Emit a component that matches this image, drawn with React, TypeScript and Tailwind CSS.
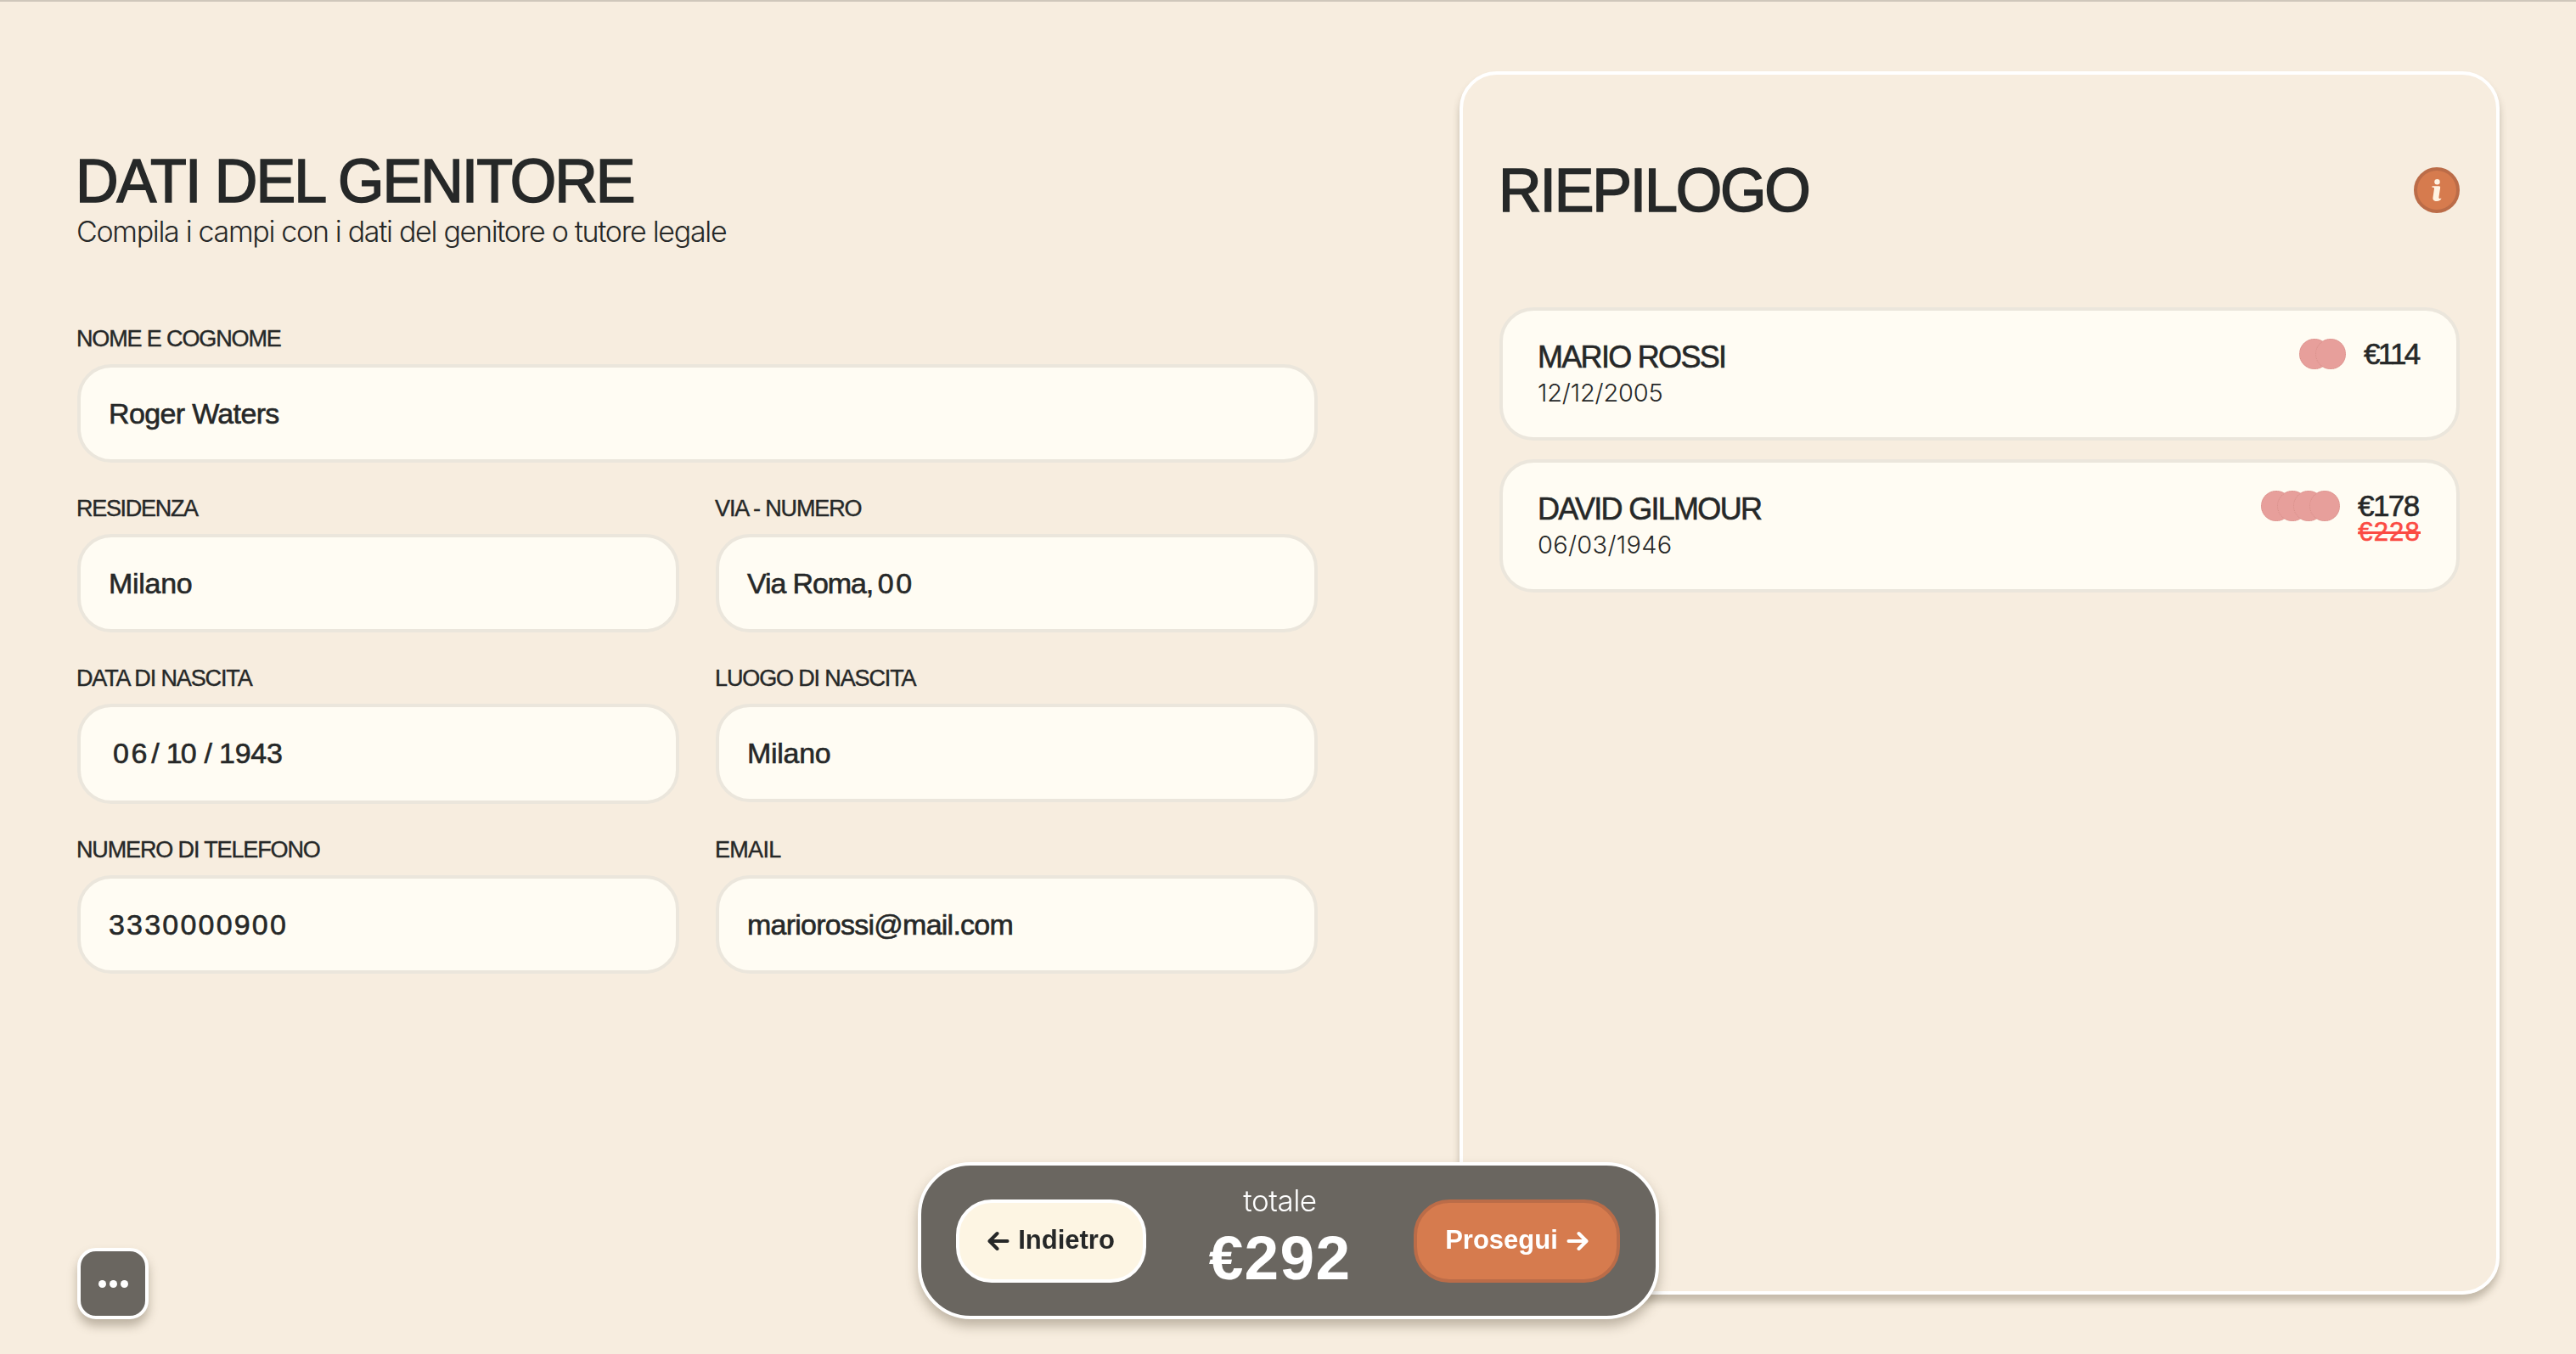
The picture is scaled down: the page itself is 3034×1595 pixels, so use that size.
import type { ReactNode } from "react";
import { clsx } from "clsx";

const SANS = "font-['Liberation_Sans',Arial,sans-serif]";
const LIGHT = "font-['Inter','Liberation_Sans',sans-serif] font-light";
// Liberation has no medium weight, a thin stroke gives the same colour
const MEDIUM = "[-webkit-text-stroke:0.6px_#262828]";
const HEADING = "origin-left scale-x-[0.96] text-[73px] whitespace-nowrap [-webkit-text-stroke:1.6px_#262828]";

interface FieldProps {
  label: string;
  value: ReactNode;
  labelClass?: string;
  valueClass?: string;
  wide?: boolean;
  tall?: boolean;
}

function Field({ label, value, labelClass = "tracking-[-1.13px]", valueClass, wide, tall }: FieldProps) {
  return (
    <div className={clsx(wide && "col-span-2")}>
      <div className={clsx("-ml-px leading-[38px] mb-[11px] text-[27px] whitespace-nowrap [-webkit-text-stroke:0.4px_#262828]", labelClass)}>
        {label}
      </div>
      <div className={clsx("flex items-center rounded-[40px] border-4 border-[#ebe6dc] bg-[#fffcf3] pl-[33px]", tall ? "h-[118px] pb-px" : "h-[116px]")}>
        <span className={clsx("flex text-[34px] whitespace-pre", MEDIUM, valueClass)}>{value}</span>
      </div>
    </div>
  );
}

function BirthDate() {
  return (
    <>
      <span className="ml-[5px] tracking-[2.5px]">06</span>
      <span className="ml-[2.5px]">/</span>
      <span className="ml-[8px] tracking-[-2px]">10</span>
      <span className="ml-[11px]">/</span>
      <span className="ml-[8px] tracking-[-0.3px]">1943</span>
    </>
  );
}

function Tokens({ count }: { count: number }) {
  return (
    <div className="flex -space-x-[17px]">
      {Array.from({ length: count }, (_, i) => (
        <span key={i} className="size-9 rounded-full bg-[#e79f9b] border border-dotted border-[#d8908a]" />
      ))}
    </div>
  );
}

interface GuestProps {
  name: string;
  date: string;
  dateClass?: string;
  tokens: number;
  price: string;
  priceClass?: string;
  oldPrice?: string;
}

function GuestCard({ name, date, dateClass, tokens, price, priceClass, oldPrice }: GuestProps) {
  return (
    <div className="flex justify-between h-[157px] rounded-[40px] border-4 border-[#ebe6dc] bg-[#fffcf3] pt-[33px] pl-[41px] pr-[42px]">
      <div>
        <div className={clsx("text-[36px] leading-[44px] tracking-[-1.7px]", MEDIUM)}>{name}</div>
        <div className={clsx("text-[29px] leading-[40px]", LIGHT, dateClass)}>{date}</div>
      </div>
      <div className="flex gap-[21.5px]">
        <Tokens count={tokens} />
        <div className="flex flex-col items-end">
          <span className={clsx("mr-[2.5px] text-[35px] leading-[36px]", MEDIUM, priceClass)}>{price}</span>
          {oldPrice && (
            <span className="text-[31px] leading-[26px] tracking-[1.2px] text-[#fb4b43] line-through [-webkit-text-stroke:0.6px_#fb4b43]">
              {oldPrice}
            </span>
          )}
        </div>
      </div>
    </div>
  );
}

function Arrow({ flip }: { flip?: boolean }) {
  return (
    <svg
      viewBox="0 0 26 24"
      className={clsx("w-[26px] h-[24px]", flip && "-scale-x-100")}
      fill="none"
      stroke="currentColor"
      strokeWidth="4"
      strokeLinecap="round"
      strokeLinejoin="round"
    >
      <path d="M2.5 12H23" />
      <path d="M14.5 3L23.5 12L14.5 21" />
    </svg>
  );
}

export default function App() {
  return (
    <div className={clsx("relative flex h-[1595px] w-full overflow-hidden bg-[#f7eddf] text-[#262828] border-t-2 border-[#cfc7bb]", SANS)}>
      {/* Form */}
      <section className="ml-[91px] w-[1461px] pt-[174px]">
        <h1 className={clsx("-ml-[2px] leading-[74px] tracking-[-2.1px]", HEADING)}>DATI DEL GENITORE</h1>
        <p className={clsx("-ml-px text-[34px] leading-[46px] mb-[84px] tracking-[-1.31px] whitespace-nowrap", LIGHT)}>
          Compila i campi con i dati del genitore o tutore legale
        </p>
        <div className="grid grid-cols-2 gap-x-[43px] gap-y-[35px]">
          <Field wide label="NOME E COGNOME" value="Roger Waters" valueClass="tracking-[-0.65px]" />
          <Field label="RESIDENZA" labelClass="tracking-[-1.3px]" value="Milano" valueClass="tracking-[-0.3px]" />
          <Field
            label="VIA - NUMERO"
            value={
              <>
                <span className="tracking-[-1.1px]">Via Roma,</span>
                <span className="ml-[5.5px] tracking-[2.6px]">00</span>
              </>
            }
          />
          <Field tall label="DATA DI NASCITA" value={<BirthDate />} />
          <Field label="LUOGO DI NASCITA" value="Milano" valueClass="tracking-[-0.3px]" />
          <Field label="NUMERO DI TELEFONO" value="3330000900" valueClass="tracking-[2.2px]" />
          <Field label="EMAIL" labelClass="tracking-[-0.7px]" value="mariorossi@mail.com" valueClass="tracking-[-0.75px]" />
        </div>
      </section>

      {/* Summary */}
      <aside className="ml-[167px] mt-[82px] h-[1441px] w-[1225px] rounded-[44px] border-4 border-white pt-[96px] px-[43px] shadow-[0_8px_8px_rgba(80,70,50,0.3)]">
        <div className="flex h-20 items-center justify-between">
          <h2 className={clsx("-ml-[1.5px] leading-[80px] tracking-[-2.3px]", HEADING)}>RIEPILOGO</h2>
          <button className="flex size-[54px] items-center justify-center rounded-full border-4 border-[#bb6c48] bg-[#d67b4e] text-[#fff3e2]">
            <svg viewBox="0 0 12 26" className="w-[12px] h-[26px]" fill="currentColor">
              <circle cx="6.5" cy="3.2" r="3.2" />
              <path d="M.5 8.2H8.4C10 8.2 10.3 9 10.1 10.2L8.4 21.5C8.3 22.8 9.2 23.3 11.5 22.6C11 24.7 8.8 26 6 26C2.5 26 1.1 24.3 1.5 21.5L3 11.2C3.1 10.1 2.5 9.8 .5 9.8Z" />
            </svg>
          </button>
        </div>
        <div className="mt-[98px] flex flex-col gap-[22px]">
          <GuestCard name="MARIO ROSSI" date="12/12/2005" dateClass="tracking-[-0.2px]" tokens={2} price="€114" priceClass="tracking-[-2.7px]" />
          <GuestCard name="DAVID GILMOUR" date="06/03/1946" dateClass="tracking-[0.3px]" tokens={4} price="€178" priceClass="tracking-[-1.6px]" oldPrice="€228" />
        </div>
      </aside>

      {/* Menu */}
      <button className="fixed left-[91px] top-[1470px] flex size-[84px] items-center justify-center gap-1 rounded-[22px] border-4 border-white bg-[#6a6660] shadow-[0_8px_12px_rgba(80,70,50,0.35)]">
        <span className="size-[9px] rounded-full bg-white" />
        <span className="size-[9px] rounded-full bg-white" />
        <span className="size-[9px] rounded-full bg-white" />
      </button>

      {/* Bottom bar */}
      <div className="fixed left-[1081px] top-[1369px] flex h-[185px] w-[873px] items-center justify-between rounded-[62px] border-4 border-white bg-[#6a6660] pl-[41px] pr-[42px] shadow-[0_8px_14px_rgba(80,70,50,0.35)]">
        <button className="flex h-[98px] w-[224px] items-center justify-center gap-[10px] rounded-[42px] border-4 border-white bg-[#fdf5e3] text-[31px] font-bold">
          <Arrow flip />
          Indietro
        </button>
        <div className="flex flex-col items-center gap-[11px] pb-[11px] text-white">
          <span className={clsx("text-[35px] leading-[41px] tracking-[-0.5px]", LIGHT)}>totale</span>
          <span className="text-[73px] leading-[72px] font-bold tracking-[1.3px]">€292</span>
        </div>
        <button className="flex h-[98px] w-[243px] items-center justify-center gap-[10px] rounded-[42px] border-4 border-[#bb6c48] bg-[#d67b4e] text-[31px] font-bold text-white">
          Prosegui
          <Arrow />
        </button>
      </div>
    </div>
  );
}
